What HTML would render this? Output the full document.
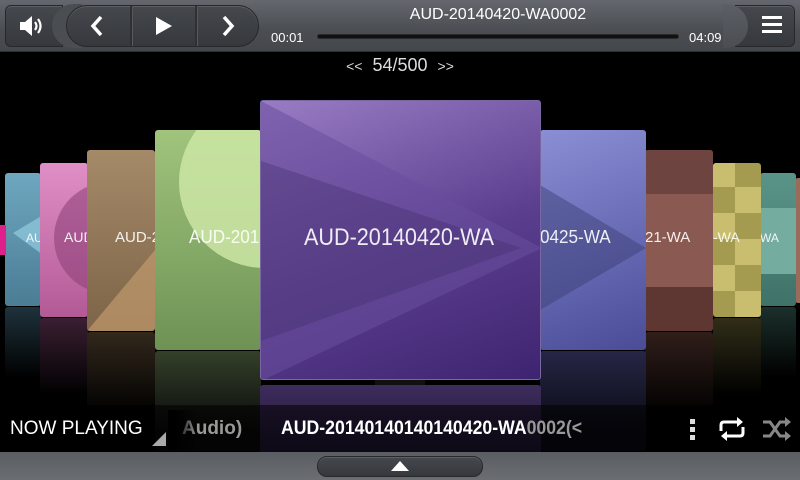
<!DOCTYPE html>
<html><head><meta charset="utf-8"><style>
*{margin:0;padding:0;box-sizing:border-box}
body{width:800px;height:480px;background:#000;overflow:hidden;position:relative;font-family:"Liberation Sans",sans-serif;color:#fff}
.abs{position:absolute}
.top{left:0;top:0;width:800px;height:52px;background:linear-gradient(#64676d,#4a4d52 60%,#44474c);border-bottom:1px solid #2a2c2f}
.btn{background:linear-gradient(#45484d,#35383c);border:1px solid #26282b;box-shadow:inset 0 1px 0 #5c5f64}
.cov{position:absolute;overflow:hidden;border-radius:3px}
.cov span{position:absolute;white-space:nowrap;color:rgba(255,255,255,.9);transform-origin:left}
.ref{position:absolute;overflow:hidden;border-radius:3px}
.bot{left:0;top:452px;width:800px;height:28px;background:linear-gradient(#5a5d62,#6a6d72)}
</style></head><body>
<div class="abs top"></div>
<div class="abs btn" style="left:5px;top:5px;width:58px;height:42px;border-radius:6px 0 0 6px"></div>
<svg class="abs" style="left:18px;top:15px" width="26" height="22" viewBox="0 0 26 22"><path d="M2 7h5l7-6v20l-7-6H2z" fill="#fff"/><path d="M17 7q3 4 0 8M20 4q5 7 0 14" stroke="#fff" stroke-width="2.2" fill="none"/></svg>
<div class="abs" style="left:52px;top:4px;width:30px;height:44px;border-radius:22px 0 0 22px;background:#4a4d52"></div>
<div class="abs btn" style="left:66px;top:5px;width:193px;height:42px;border-radius:21px"></div>
<div class="abs" style="left:130px;top:6px;width:3px;height:40px;background:#2e3034;border-right:1px solid #55585d"></div>
<div class="abs" style="left:195px;top:6px;width:3px;height:40px;background:#2e3034;border-right:1px solid #55585d"></div>
<svg class="abs" style="left:89px;top:15px" width="16" height="22"><path d="M12 2L4 11l8 9" stroke="#fff" stroke-width="3.5" fill="none"/></svg>
<svg class="abs" style="left:155px;top:16px" width="18" height="20"><path d="M1 1l16 9-16 9z" fill="#fff"/></svg>
<svg class="abs" style="left:220px;top:15px" width="16" height="22"><path d="M4 2l8 9-8 9" stroke="#fff" stroke-width="3.5" fill="none"/></svg>
<div class="abs" style="left:300px;top:6px;width:396px;text-align:center;font-size:16px">AUD-20140420-WA0002</div>
<div class="abs" style="left:271px;top:30px;font-size:13px">00:01</div>
<div class="abs" style="left:317px;top:34px;width:362px;height:5px;border-radius:3px;background:#111;border:1px solid #2a2a2a"></div>
<div class="abs" style="left:689px;top:30px;font-size:13px">04:09</div>
<div class="abs btn" style="left:735px;top:5px;width:60px;height:42px;border-radius:0 6px 6px 0"></div>
<div class="abs" style="left:723px;top:4px;width:25px;height:44px;border-radius:0 22px 22px 0;background:linear-gradient(#5c5f65,#4a4d52)"></div>
<div class="abs" style="left:762px;top:16px;width:20px;height:3px;background:#fff;box-shadow:0 7px 0 #fff,0 14px 0 #fff"></div>
<div class="abs" style="left:0;top:55px;width:800px;text-align:center;font-size:18px;color:#ddd"><span style="font-size:14px">&lt;&lt;</span>&nbsp;&nbsp;54/500&nbsp;&nbsp;<span style="font-size:14px">&gt;&gt;</span></div>

<!-- reflections -->
<div class="ref" style="left:5px;top:307px;width:36px;height:100px;background:linear-gradient(#1e323c,#000 70%)"></div>
<div class="ref" style="left:760px;top:307px;width:36px;height:100px;background:linear-gradient(#1c302b,#000 70%)"></div>
<div class="ref" style="left:40px;top:318px;width:48px;height:110px;background:linear-gradient(#3a1f32,#000 70%)"></div>
<div class="ref" style="left:713px;top:318px;width:48px;height:110px;background:linear-gradient(#302e18,#000 70%)"></div>
<div class="ref" style="left:87px;top:332px;width:68px;height:110px;background:linear-gradient(#32281c,#000 75%)"></div>
<div class="ref" style="left:645px;top:332px;width:68px;height:110px;background:linear-gradient(#301e1a,#000 75%)"></div>
<div class="ref" style="left:155px;top:351px;width:106px;height:100px;background:linear-gradient(#34402a,#0a0a0a 80%)"></div>
<div class="ref" style="left:540px;top:351px;width:106px;height:100px;background:linear-gradient(#262646,#0a0a14 80%)"></div>
<div class="ref" style="left:260px;top:385px;width:281px;height:70px;background:linear-gradient(#3e2c5c,#1c1530)"></div>
<div class="abs" style="left:375px;top:380px;width:50px;height:5px;background:#111"></div>

<!-- covers -->
<div class="cov" style="left:5px;top:173px;width:36px;height:133px;background:linear-gradient(#6ea7bf,#4b7d95)"><svg class="abs" width="36" height="133"><path d="M8 60l30-18v40z" fill="#8cc4da" opacity=".8"/></svg><span style="left:21px;top:58px;font-size:12px">AU</span></div>
<div class="abs" style="left:0;top:225px;width:6px;height:30px;background:#e0208a"></div>
<div class="cov" style="left:795px;top:178px;width:8px;height:125px;background:#9a6a5a"></div>
<div class="cov" style="left:760px;top:173px;width:36px;height:133px;background:linear-gradient(#5a9488,#3f7268)"><div class="abs" style="left:0;top:35px;width:36px;height:66px;background:#74aca0"></div><span style="left:0;top:58px;font-size:12px">WA</span></div>
<div class="cov" style="left:40px;top:163px;width:48px;height:154px;background:linear-gradient(#e08fc6,#b35a96)"><svg class="abs" width="48" height="154"><circle cx="70" cy="75" r="56" fill="#8a3e74" opacity=".55"/></svg><span style="left:24px;top:66px;font-size:14px">AUD</span></div>
<div class="cov" style="left:713px;top:163px;width:48px;height:154px;background:#a49a50"><svg class="abs" width="48" height="154"><g fill="#c9bd70"><rect x="0" y="0" width="22" height="24"/><rect x="22" y="24" width="26" height="26"/><rect x="0" y="50" width="22" height="26"/><rect x="22" y="76" width="26" height="26"/><rect x="0" y="102" width="22" height="26"/><rect x="22" y="128" width="26" height="26"/></g></svg><span style="left:0;top:66px;font-size:14px">-WA</span></div>
<div class="cov" style="left:87px;top:150px;width:68px;height:181px;background:linear-gradient(#a48a68,#7e6448)"><svg class="abs" width="68" height="181"><path d="M0 181L68 100V181z" fill="#c09a6c" opacity=".7"/></svg><span style="left:28px;top:79px;font-size:15px">AUD-2</span></div>
<div class="cov" style="left:645px;top:150px;width:68px;height:181px;background:#8a5a52"><div class="abs" style="left:0;top:0;width:68px;height:44px;background:#6e4440"></div><div class="abs" style="left:0;top:137px;width:68px;height:44px;background:#5e3632"></div><span style="left:0;top:79px;font-size:15px">21-WA</span></div>
<div class="cov" style="left:155px;top:130px;width:106px;height:220px;background:linear-gradient(#a0c47c,#6e9254)"><svg class="abs" width="106" height="220"><circle cx="110" cy="52" r="86" fill="#cde6a4" opacity=".85"/></svg><span style="left:34px;top:97px;font-size:18px;transform:scaleX(.95)">AUD-201</span></div>
<div class="cov" style="left:540px;top:130px;width:106px;height:220px;background:linear-gradient(160deg,#8a8ed4,#4a4c98)"><svg class="abs" width="106" height="220"><path d="M0 55L106 118L0 180z" fill="#3a3c70" opacity=".45"/></svg><span style="left:0;top:97px;font-size:18px;transform:scaleX(.95)">0425-WA</span></div>
<div class="cov" style="left:260px;top:100px;width:281px;height:280px;background:linear-gradient(160deg,#9a7cc4,#5a3e8e 55%,#3e2470);border:1px solid #7a66a0"><svg class="abs" width="281" height="280"><path d="M0 0L281 147L0 280z" fill="#6a4e9e" opacity=".55"/><path d="M0 60L260 147L0 240z" fill="#3e2a66" opacity=".35"/></svg><span style="left:43px;top:123px;font-size:24px;transform:scaleX(.9)">AUD-20140420-WA</span></div>

<!-- now playing strip -->
<div class="abs" style="left:0;top:405px;width:800px;height:47px;background:rgba(0,0,0,.55)"></div>
<div class="abs" style="left:10px;top:418px;font-size:19px;white-space:nowrap">NOW PLAYING</div>
<svg class="abs" style="left:152px;top:432px" width="14" height="14"><path d="M14 0V14H0z" fill="#aaa"/></svg>
<div class="abs" style="left:182px;top:418px;font-size:19px;color:#999;font-weight:bold">Audio)</div>
<div class="abs" style="left:168px;top:410px;width:30px;height:40px;background:linear-gradient(90deg,#000 20%,rgba(0,0,0,0))"></div>
<div class="abs" style="left:281px;top:418px;font-size:19px;font-weight:bold;white-space:nowrap;transform:scaleX(.93);transform-origin:left">AUD-20140140140140420-WA<span style="color:#999">0002(&lt;</span></div>
<div class="abs" style="left:690px;top:419px;width:5px;height:5px;background:#ddd;box-shadow:0 8px 0 #ddd,0 16px 0 #ddd"></div>
<svg class="abs" style="left:717px;top:416px" width="30" height="26" viewBox="0 0 30 26"><path d="M4 15V9q0-3 3-3h14M26 11v6q0 3-3 3H9" stroke="#fff" stroke-width="3" fill="none"/><path d="M20 1l6 5-6 5zM10 15l-6 5 6 5z" fill="#fff"/></svg>
<svg class="abs" style="left:762px;top:417px" width="30" height="24" viewBox="0 0 30 24"><path d="M1 5h7l10 14h6M1 19h7l10-14h6" stroke="#888" stroke-width="3" fill="none"/><path d="M23 0l6 5-6 5zM23 14l6 5-6 5z" fill="#888"/></svg>

<div class="abs bot"></div>
<div class="abs btn" style="left:317px;top:456px;width:166px;height:21px;border-radius:10px"></div>
<svg class="abs" style="left:391px;top:461px" width="18" height="10"><path d="M0 10L9 0l9 10z" fill="#fff"/></svg>
</body></html>
